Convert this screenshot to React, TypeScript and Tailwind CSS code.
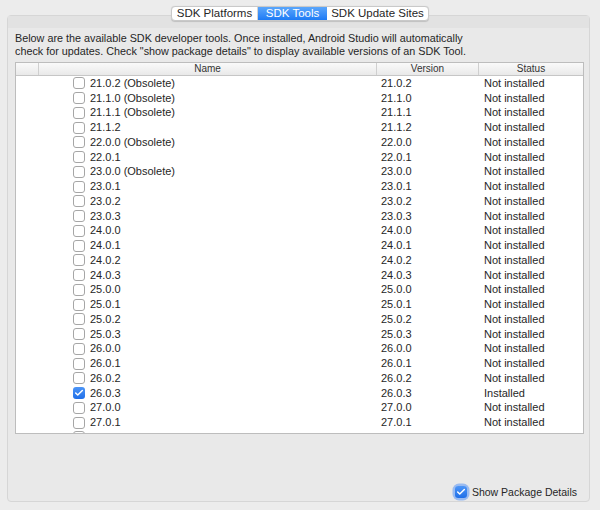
import { Check } from 'lucide-react'

type Tool = { name: string; version: string; installed?: boolean }

const tools: Tool[] = [
  { name: '21.0.2 (Obsolete)', version: '21.0.2' },
  { name: '21.1.0 (Obsolete)', version: '21.1.0' },
  { name: '21.1.1 (Obsolete)', version: '21.1.1' },
  { name: '21.1.2', version: '21.1.2' },
  { name: '22.0.0 (Obsolete)', version: '22.0.0' },
  { name: '22.0.1', version: '22.0.1' },
  { name: '23.0.0 (Obsolete)', version: '23.0.0' },
  { name: '23.0.1', version: '23.0.1' },
  { name: '23.0.2', version: '23.0.2' },
  { name: '23.0.3', version: '23.0.3' },
  { name: '24.0.0', version: '24.0.0' },
  { name: '24.0.1', version: '24.0.1' },
  { name: '24.0.2', version: '24.0.2' },
  { name: '24.0.3', version: '24.0.3' },
  { name: '25.0.0', version: '25.0.0' },
  { name: '25.0.1', version: '25.0.1' },
  { name: '25.0.2', version: '25.0.2' },
  { name: '25.0.3', version: '25.0.3' },
  { name: '26.0.0', version: '26.0.0' },
  { name: '26.0.1', version: '26.0.1' },
  { name: '26.0.2', version: '26.0.2' },
  { name: '26.0.3', version: '26.0.3', installed: true },
  { name: '27.0.0', version: '27.0.0' },
  { name: '27.0.1', version: '27.0.1' },
]

const tabs = ['SDK Platforms', 'SDK Tools', 'SDK Update Sites']

const cols = 'grid grid-cols-[23px_338px_102px_1fr]'

function Checkbox({ checked }: { checked?: boolean }) {
  return checked ? (
    <span className="flex h-[12px] w-[12px] items-center justify-center rounded-[3px] bg-gradient-to-b from-[#4c95f7] to-[#1f6fe8]">
      <Check className="h-[10px] w-[10px] text-white" strokeWidth={3.5} />
    </span>
  ) : (
    <span className="block h-[12px] w-[12px] rounded-[3px] border border-[#a6a6a6] bg-white" />
  )
}

export default function App() {
  return (
    <div
      className="relative h-[510px] w-[600px] bg-[#ececec] text-[#262626]"
      style={{ fontFamily: '"Liberation Sans", Arial, sans-serif' }}
    >
      {/* tab bar sits over the panel's top edge */}
      <div className="absolute left-[171px] top-[6px] z-10 flex h-[15px] overflow-hidden rounded-[4px] border border-[#c9c9c9] bg-white text-[11.5px] leading-[13px] shadow-[0_0.5px_1px_rgba(0,0,0,0.15)]">
        {tabs.map((t) => (
          <div
            key={t}
            className={
              t === 'SDK Tools'
                ? 'flex w-[69px] items-center justify-center bg-gradient-to-b from-[#5aa6fb] to-[#1c7af5] text-white'
                : t === 'SDK Platforms'
                  ? 'flex w-[86px] items-center justify-center border-r border-[#d4d4d4]'
                  : 'flex w-[101px] items-center justify-center'
            }
          >
            {t}
          </div>
        ))}
      </div>

      <div className="absolute left-[7px] top-[15px] flex h-[487px] w-[583px] flex-col rounded-[4px] border border-[#d6d6d6] bg-[#e9e9e9]">
        <div className="h-[12px] bg-[#e2e2e2]" />
        <div className="px-[7px] pt-[4px] text-[10.8px] leading-[13px]">
          <p>Below are the available SDK developer tools. Once installed, Android Studio will automatically</p>
          <p>check for updates. Check "show package details" to display available versions of an SDK Tool.</p>
        </div>

        <div className="ml-[7px] mt-[4px] w-[569px] border border-[#bdbdbd] bg-white">
          <div className={`${cols} h-[13px] border-b border-[#c6c6c6] bg-gradient-to-b from-[#fafafa] to-[#e9e9e9] text-[10px] leading-[12px] text-[#333]`}>
            <div className="border-r border-[#cfcfcf]" />
            <div className="border-r border-[#cfcfcf] text-center">Name</div>
            <div className="border-r border-[#cfcfcf] text-center">Version</div>
            <div className="text-center">Status</div>
          </div>
          <div className="h-[357px] overflow-hidden">
            {tools.map((tool) => (
              <div key={tool.name} className={`${cols} h-[14.75px] items-center text-[11px] leading-[13px]`}>
                <div />
                <div className="flex items-center gap-[5px] pl-[34px]">
                  <Checkbox checked={tool.installed} />
                  <span>{tool.name}</span>
                </div>
                <div className="pl-[4px]">{tool.version}</div>
                <div className="pl-[5px]">{tool.installed ? 'Installed' : 'Not installed'}</div>
              </div>
            ))}
            {/* next row, only the top of its box shows */}
            <div className={`${cols} h-[14.75px] items-center`}>
              <div />
              <div className="pl-[34px]">
                <Checkbox />
              </div>
            </div>
          </div>
        </div>

        <div className="mt-auto mb-[2px] flex items-center justify-end gap-[5px] pr-[12px] text-[10.5px] leading-[14px]">
          <span className="rounded-[4px] shadow-[0_0_0_2.5px_rgba(90,150,245,0.55)]">
            <Checkbox checked />
          </span>
          <span>Show Package Details</span>
        </div>
      </div>
    </div>
  )
}
